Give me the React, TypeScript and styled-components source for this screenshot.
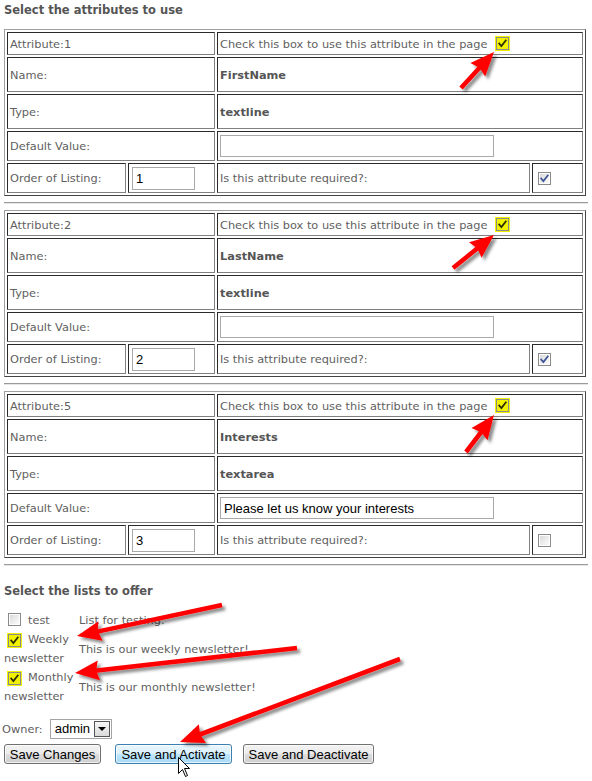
import React from "react";
import styled, { createGlobalStyle } from "styled-components";

const Global = createGlobalStyle`
  html, body { margin: 0; padding: 0; background: #fff; }
  body { font-family: "DejaVu Sans", Verdana, sans-serif; font-size: 11.35px; color: #5a5a5a; }
`;

const Page = styled.div`
  position: relative;
  width: 592px;
  height: 781px;
  overflow: hidden;
  box-sizing: border-box;
  padding: 0 4px;
`;

const Heading = styled.h3<{ $top: number; $bottom: number }>`
  margin: ${(p) => p.$top}px 0 ${(p) => p.$bottom}px;
  font: bold 11.5px/20px "DejaVu Sans", Verdana, sans-serif;
  color: #555;
`;

const AttrTable = styled.div`
  display: grid;
  grid-template-columns: 119px 87px 313px 51px;
  grid-template-rows: 23px 35px 35px 30px 30px;
  gap: 2px;
  padding: 2px;
  width: 582px;
  box-sizing: border-box;
  border: 1px solid;
  border-color: #a0a0a0 #444 #444 #a0a0a0;
`;

const Cell = styled.div<{ $span?: number; $bold?: boolean; $pad?: number }>`
  grid-column: span ${(p) => p.$span ?? 1};
  box-sizing: border-box;
  border: 1px solid;
  border-color: #2a2a2a #808080 #808080 #2a2a2a;
  display: flex;
  align-items: center;
  padding-left: ${(p) => p.$pad ?? 2}px;
  font-size: 11.35px;
  font-weight: ${(p) => (p.$bold ? "bold" : "normal")};
  color: ${(p) => (p.$bold ? "#555" : "#5f5f5f")};
  white-space: nowrap;
`;

const TextInput = styled.input<{ $w: number; $h: number }>`
  width: ${(p) => p.$w}px;
  height: ${(p) => p.$h}px;
  box-sizing: border-box;
  margin: 0;
  border: 1px solid #a9a9a9;
  padding: 0 3px;
  font: 13px "Liberation Sans", Arial, sans-serif;
  color: #000;
  background: #fff;
  outline: none;
`;

const Rule = styled.hr`
  margin: 6px 0;
  width: 584px;
  height: 0;
  border: 0;
  border-top: 1px solid #9a9a9a;
  border-bottom: 1px solid #e6e6e6;
`;

const Box = styled.span<{ $tone: "yellow" | "blue" | "plain"; $ml?: number }>`
  display: inline-flex;
  align-items: center;
  justify-content: center;
  flex: none;
  width: 13px;
  height: 13px;
  box-sizing: border-box;
  margin-left: ${(p) => p.$ml ?? 0}px;
  border: 1px solid #8a8a8a;
  background: ${(p) =>
    p.$tone === "yellow"
      ? "#f2f200"
      : "linear-gradient(135deg, #d6d6d6 0%, #f0f0f0 60%, #fdfdfd 100%)"};
  box-shadow: ${(p) => (p.$tone === "yellow" ? "0 0 0 1px #f2f200" : "inset 0 0 0 1px #fff")};
  vertical-align: -2px;
`;

const Check = ({ tone, checked, ml }: { tone: "yellow" | "blue" | "plain"; checked: boolean; ml?: number }) => (
  <Box $tone={tone} $ml={ml}>
    {checked && (
      <svg width="9" height="9" viewBox="0 0 9 9">
        <path
          d="M1.2 4.6 L3.4 7 L7.8 1.4"
          fill="none"
          stroke={tone === "yellow" ? "#2d2d00" : "#3d5596"}
          strokeWidth="1.8"
          strokeLinecap="square"
        />
      </svg>
    )}
  </Box>
);

const ListSection = styled.div`
  display: flex;
  flex-direction: column;
  padding-top: 10px;
`;

const ListRow = styled.div`
  display: grid;
  grid-template-columns: 75px auto;
  align-items: center;
`;

const ListName = styled.div`
  font-size: 11.35px;
  line-height: 19px;
  color: #5f5f5f;
  & > span { margin: 0 7px 0 4px; }
`;

const ListDesc = styled.div`
  font-size: 11.35px;
  line-height: 19px;
  color: #5f5f5f;
  white-space: nowrap;
`;

const OwnerRow = styled.div`
  display: flex;
  align-items: center;
  gap: 7px;
  margin: 13px 0 5px -2px;
  font-size: 11.35px;
  color: #5f5f5f;
`;

const Select = styled.span`
  display: inline-flex;
  align-items: stretch;
  width: 62px;
  height: 20px;
  box-sizing: border-box;
  border: 1px solid #a5a5a5;
  background: #fff;
`;

const SelectValue = styled.span`
  flex: 1;
  min-width: 0;
  padding-left: 4px;
  font: 13px/18px "Liberation Sans", Arial, sans-serif;
  color: #000;
`;

const SelectButton = styled.span`
  flex: none;
  width: 16px;
  margin: 1px;
  box-sizing: border-box;
  border: 1px solid #555;
  background: linear-gradient(#f6f6f6, #dadada);
  display: flex;
  align-items: center;
  justify-content: center;
  &::after {
    content: "";
    border-left: 4px solid transparent;
    border-right: 4px solid transparent;
    border-top: 4px solid #000;
  }
`;

const ButtonRow = styled.div`
  display: flex;
  gap: 11px;
`;

const Button = styled.button<{ $active?: boolean; $w: number; $mr?: number }>`
  width: ${(p) => p.$w}px;
  height: 20px;
  margin: 0 ${(p) => p.$mr ?? 0}px 0 0;
  padding: 0;
  box-sizing: border-box;
  font: 13px "Liberation Sans", Arial, sans-serif;
  color: #000;
  border-radius: 3px;
  border: 1px solid ${(p) => (p.$active ? "#3c7fb1" : "#707070")};
  background: ${(p) =>
    p.$active
      ? "linear-gradient(#eaf6fd 0%, #d9f0fc 50%, #bee6fd 51%, #a7d9f5 100%)"
      : "linear-gradient(#f2f2f2 0%, #ebebeb 50%, #dddddd 51%, #cfcfcf 100%)"};
  box-shadow: inset 0 0 0 1px rgba(255, 255, 255, 0.7);
`;

const Overlay = styled.svg`
  position: absolute;
  left: 0;
  top: 0;
  width: 592px;
  height: 781px;
  pointer-events: none;
`;

type Attr = {
  n: number;
  name: string;
  type: string;
  def: string;
  order: string;
  required: boolean;
};

const attrs: Attr[] = [
  { n: 1, name: "FirstName", type: "textline", def: "", order: "1", required: true },
  { n: 2, name: "LastName", type: "textline", def: "", order: "2", required: true },
  { n: 5, name: "Interests", type: "textarea", def: "Please let us know your interests", order: "3", required: false },
];

const lists = [
  { name: "test", desc: "List for testing.", on: false },
  { name: "Weekly newsletter", desc: "This is our weekly newsletter!", on: true },
  { name: "Monthly newsletter", desc: "This is our monthly newsletter!", on: true },
];

const arrowPath = (tx: number, ty: number, px: number, py: number, L = 22, H = 10, S = 2.3) => {
  const dx = px - tx;
  const dy = py - ty;
  const len = Math.hypot(dx, dy);
  const ux = dx / len;
  const uy = dy / len;
  const nx = -uy;
  const ny = ux;
  const bx = px - ux * L;
  const by = py - uy * L;
  const pts = [
    [tx + nx * S, ty + ny * S],
    [bx + nx * S, by + ny * S],
    [bx + nx * H - ux * 2, by + ny * H - uy * 2],
    [px, py],
    [bx - nx * H - ux * 2, by - ny * H - uy * 2],
    [bx - nx * S, by - ny * S],
    [tx - nx * S, ty - ny * S],
  ];
  return "M" + pts.map((p) => p.map((v) => v.toFixed(1)).join(" ")).join(" L") + " Z";
};

const arrows: [number, number, number, number][] = [
  [461, 88, 494, 52],
  [453, 268, 494, 235],
  [466, 452, 494, 415],
  [222, 605, 77, 636],
  [297, 648, 75, 673],
  [400, 659, 180, 742],
];

export default function App() {
  return (
    <Page>
      <Global />
      <Heading $top={0} $bottom={9}>Select the attributes to use</Heading>
      {attrs.map((a) => (
        <React.Fragment key={a.n}>
          <AttrTable>
            <Cell $span={2}>Attribute:{a.n}</Cell>
            <Cell $span={2}>
              Check this box to use this attribute in the page
              <Check tone="yellow" checked ml={8} />
            </Cell>
            <Cell $span={2}>Name:</Cell>
            <Cell $span={2} $bold>{a.name}</Cell>
            <Cell $span={2}>Type:</Cell>
            <Cell $span={2} $bold>{a.type}</Cell>
            <Cell $span={2}>Default Value:</Cell>
            <Cell $span={2}>
              <TextInput $w={274} $h={22} value={a.def} readOnly />
            </Cell>
            <Cell>Order of Listing:</Cell>
            <Cell $pad={3}>
              <TextInput $w={63} $h={23} value={a.order} readOnly />
            </Cell>
            <Cell>Is this attribute required?:</Cell>
            <Cell $pad={5}>
              <Check tone="blue" checked={a.required} />
            </Cell>
          </AttrTable>
          <Rule />
        </React.Fragment>
      ))}
      <Heading $top={15} $bottom={0}>Select the lists to offer</Heading>
      <ListSection>
        {lists.map((l) => (
          <ListRow key={l.name}>
            <ListName>
              <Check tone={l.on ? "yellow" : "plain"} checked={l.on} />
              {l.name}
            </ListName>
            <ListDesc>{l.desc}</ListDesc>
          </ListRow>
        ))}
      </ListSection>
      <OwnerRow>
        Owner:
        <Select>
          <SelectValue>admin</SelectValue>
          <SelectButton />
        </Select>
      </OwnerRow>
      <ButtonRow>
        <Button $w={97} $mr={3}>Save Changes</Button>
        <Button $w={117} $active>Save and Activate</Button>
        <Button $w={131}>Save and Deactivate</Button>
      </ButtonRow>
      <Overlay viewBox="0 0 592 781">
        <defs>
          <filter id="shadow" x="-20%" y="-20%" width="140%" height="140%">
            <feDropShadow dx="3" dy="3" stdDeviation="1.8" floodColor="#000" floodOpacity="0.45" />
          </filter>
        </defs>
        {arrows.map(([tx, ty, px, py], i) => (
          <path key={i} d={arrowPath(tx, ty, px, py)} fill="#ff0000" filter="url(#shadow)" />
        ))}
        <path
          d="M178.5 757.5 L178.5 773.5 L182.5 769.5 L185.5 776.5 L187.5 775.5 L184.5 768.5 L189.5 768.5 Z"
          fill="#fff"
          stroke="#000"
          strokeWidth="1"
        />
      </Overlay>
    </Page>
  );
}
